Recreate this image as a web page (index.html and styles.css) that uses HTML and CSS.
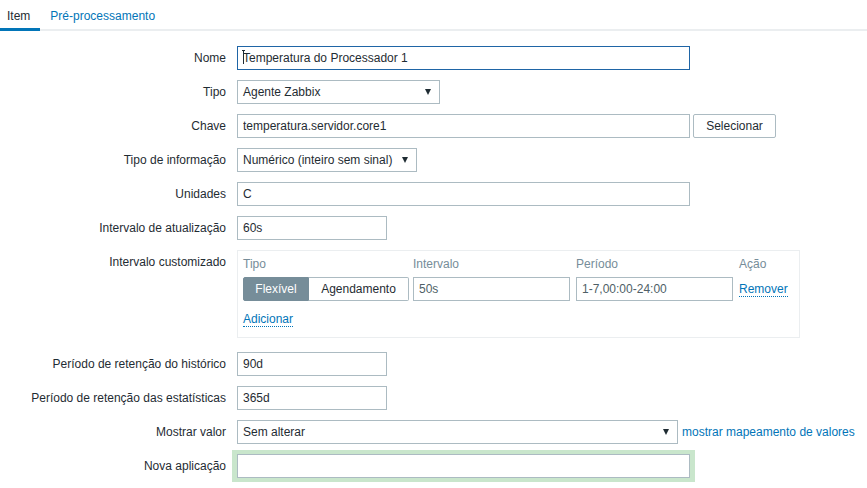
FILE: index.html
```html
<!DOCTYPE html>
<html lang="pt">
<head>
<meta charset="utf-8">
<title>Item</title>
<link rel="stylesheet" href="styles.css">
</head>
<body>
<div class="tabs">
  <div class="tab active">Item</div>
  <div class="tab">Pré-processamento</div>
</div>
<div class="form">
  <div class="row">
    <div class="lbl">Nome</div>
    <div class="field">
      <div class="focuswrap">
        <input class="inp w-wide focus" type="text" value="Temperatura do Processador 1">
        <span class="ibeam"></span>
      </div>
    </div>
  </div>
  <div class="row">
    <div class="lbl">Tipo</div>
    <div class="field"><div class="select w-tipo"><span>Agente Zabbix</span><span class="arrow"></span></div></div>
  </div>
  <div class="row">
    <div class="lbl">Chave</div>
    <div class="field"><input class="inp w-wide" type="text" value="temperatura.servidor.core1"><button class="btn">Selecionar</button></div>
  </div>
  <div class="row">
    <div class="lbl">Tipo de informação</div>
    <div class="field"><div class="select w-info"><span>Numérico (inteiro sem sinal)</span><span class="arrow"></span></div></div>
  </div>
  <div class="row">
    <div class="lbl">Unidades</div>
    <div class="field"><input class="inp w-wide" type="text" value="C"></div>
  </div>
  <div class="row">
    <div class="lbl">Intervalo de atualização</div>
    <div class="field"><input class="inp w-short" type="text" value="60s"></div>
  </div>
  <div class="row row-custom">
    <div class="lbl">Intervalo customizado</div>
    <div class="field">
      <div class="custombox">
        <div class="cgrid">
          <div class="th">Tipo</div>
          <div class="th">Intervalo</div>
          <div class="th">Período</div>
          <div class="th">Ação</div>
          <div class="seg"><span class="seg-on">Flexível</span><span class="seg-off">Agendamento</span></div>
          <div><input class="inp w-cell" type="text" value="50s"></div>
          <div><input class="inp w-cell" type="text" value="1-7,00:00-24:00"></div>
          <div class="act"><a class="dlink" href="#">Remover</a></div>
        </div>
        <div class="addrow"><a class="dlink" href="#">Adicionar</a></div>
      </div>
    </div>
  </div>
  <div class="row">
    <div class="lbl">Período de retenção do histórico</div>
    <div class="field"><input class="inp w-short" type="text" value="90d"></div>
  </div>
  <div class="row">
    <div class="lbl">Período de retenção das estatísticas</div>
    <div class="field"><input class="inp w-short" type="text" value="365d"></div>
  </div>
  <div class="row">
    <div class="lbl">Mostrar valor</div>
    <div class="field"><div class="select w-valor"><span>Sem alterar</span><span class="arrow"></span></div><a class="link map" href="#">mostrar mapeamento de valores</a></div>
  </div>
  <div class="row">
    <div class="lbl">Nova aplicação</div>
    <div class="field"><div class="glow"><input class="inp w-wide" type="text" value=""></div></div>
  </div>
</div>
</body>
</html>
```
FILE: styles.css
```css
html, body {
  margin: 0;
  padding: 0;
  background: #ffffff;
  overflow: hidden;
}
body {
  font-family: "Liberation Sans", Arial, sans-serif;
  font-size: 12px;
  color: #1f2c33;
}
.tabs {
  display: flex;
  height: 29px;
  border-bottom: 2px solid #ebeef0;
}
.tab {
  padding: 4px 10px 0 10px;
  line-height: 24px;
  height: 24px;
  color: #0275b8;
  border-bottom: 3px solid transparent;
  margin-bottom: -2px;
}
.tab:first-child {
  padding-left: 7px;
}
.tab.active {
  color: #1f2c33;
  border-bottom-color: #0275b8;
}
.form {
  padding-top: 15px;
}
.row {
  display: flex;
  margin-bottom: 10px;
}
.row-custom {
  margin-bottom: 14px;
}
.lbl {
  flex: none;
  width: 226px;
  padding-right: 11px;
  text-align: right;
  line-height: 24px;
  white-space: nowrap;
}
.field {
  display: flex;
  align-items: flex-start;
}
.inp {
  box-sizing: border-box;
  height: 24px;
  border: 1px solid #acbbc2;
  padding: 0 5px;
  margin: 0;
  font-family: "Liberation Sans", Arial, sans-serif;
  font-size: 12px;
  color: #1f2c33;
  background: #fff;
  outline: none;
  border-radius: 0;
}
.inp.focus {
  border-color: #1f65a6;
}
.w-wide { width: 453px; }
.w-short { width: 150px; }
.w-cell { width: 157px; color: #4f5f67; }
.focuswrap {
  position: relative;
}
.ibeam {
  position: absolute;
  left: 6px;
  top: 4px;
  width: 1px;
  height: 14px;
  background: #1f2c33;
}
.ibeam::before {
  content: "";
  position: absolute;
  left: -1px;
  top: 0;
  width: 3px;
  height: 1px;
  background: #1f2c33;
}
.select {
  box-sizing: border-box;
  height: 24px;
  border: 1px solid #acbbc2;
  padding: 0 8px 0 5px;
  display: flex;
  align-items: center;
  justify-content: space-between;
  background: #fff;
}
.w-tipo { width: 203px; }
.w-info { width: 180px; }
.w-valor { width: 441px; }
.arrow {
  width: 0;
  height: 0;
  border-left: 3px solid transparent;
  border-right: 3px solid transparent;
  border-top: 6px solid #1f2c33;
}
.btn {
  box-sizing: border-box;
  height: 24px;
  width: 83px;
  margin-left: 3px;
  border: 1px solid #acbbc2;
  border-radius: 2px;
  background: #fff;
  font-family: "Liberation Sans", Arial, sans-serif;
  font-size: 12px;
  color: #1f2c33;
  padding: 0;
}
.custombox {
  box-sizing: border-box;
  width: 563px;
  height: 88px;
  border: 1px solid #ebeef0;
  padding: 5px 5px;
}
.cgrid {
  display: grid;
  grid-template-columns: 170px 163px 163px auto;
  grid-template-rows: 21px 24px;
}
.th {
  color: #768d99;
  line-height: 16px;
}
.seg {
  display: flex;
  height: 24px;
}
.seg span {
  box-sizing: border-box;
  height: 24px;
  line-height: 22px;
  text-align: center;
}
.seg-on {
  width: 66px;
  background: #768d99;
  color: #fff;
  border: 1px solid #768d99;
  border-radius: 2px 0 0 2px;
}
.seg-off {
  width: 100px;
  border: 1px solid #acbbc2;
  border-left: none;
  border-radius: 0 2px 2px 0;
}
.act {
  line-height: 24px;
}
.addrow {
  padding-top: 10px;
  line-height: 16px;
}
a {
  text-decoration: none;
  color: #0275b8;
}
.dlink {
  border-bottom: 1px dotted #0275b8;
}
.map {
  margin-left: 4px;
  line-height: 24px;
  white-space: nowrap;
}
.glow {
  background: #c9e6cc;
  padding: 4px 5px;
  margin: -4px 0 0 -5px;
}
```
